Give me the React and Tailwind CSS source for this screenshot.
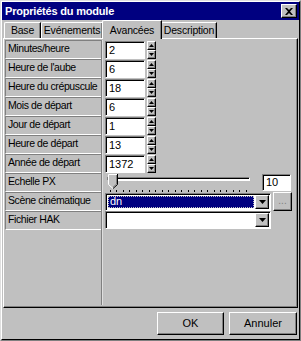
import React from 'react'

const raised = 'border border-t-white border-l-white border-r-black border-b-black shadow-[inset_-1px_-1px_0_#808080]'
const sunken = 'border border-t-[#808080] border-l-[#808080] border-r-white border-b-white shadow-[inset_1px_1px_0_#000]'
const tab = 'border-t border-l border-t-white border-l-white border-r border-r-black shadow-[inset_-1px_0_0_#808080] rounded-tl-[2px] whitespace-nowrap'

const rows = [
  { label: 'Minutes/heure', type: 'spin', value: '2' },
  { label: "Heure de l'aube", type: 'spin', value: '6' },
  { label: 'Heure du crépuscule', type: 'spin', value: '18' },
  { label: 'Mois de départ', type: 'spin', value: '6' },
  { label: 'Jour de départ', type: 'spin', value: '1' },
  { label: 'Heure de départ', type: 'spin', value: '13' },
  { label: 'Année de départ', type: 'spin', value: '1372' },
  { label: 'Echelle PX', type: 'slider', value: '10' },
  { label: 'Scène cinématique', type: 'combo', value: 'dn', selected: true },
  { label: 'Fichier HAK', type: 'combo', value: '' },
]

function Arrow({ down }) {
  return (
    <svg width="5" height="3" viewBox="0 0 5 3">
      <path d={down ? 'M0 0h5L2.5 3z' : 'M0 3h5L2.5 0z'} fill="#000" />
    </svg>
  )
}

function Spin({ value }) {
  return (
    <div className="flex items-start gap-[2px] pt-[1px]">
      <div className={`w-[40px] h-[18px] bg-white ${sunken} pl-[3px] flex items-center text-[11px]`}>{value}</div>
      <div className="flex flex-col w-[9px]">
        <div className={`h-[9px] bg-[#c0c0c0] ${raised} flex items-center justify-center`}><Arrow /></div>
        <div className={`h-[9px] bg-[#c0c0c0] ${raised} flex items-center justify-center`}><Arrow down /></div>
      </div>
    </div>
  )
}

function Slider({ value }) {
  const ticks = Array.from({ length: 22 })
  return (
    <div className="flex items-start pt-[1px]">
      <div className="relative w-[150px] h-[18px] pl-[2px] pr-[5px]">
        <div className={`mt-[3px] h-[4px] ${sunken} bg-white`} />
        <div className="flex justify-between px-[3px] mt-[9px]">
          {ticks.map((_, i) => (
            <div key={i} className="w-[1px] h-[2px] bg-black" />
          ))}
        </div>
        <svg className="absolute left-[3px] top-0" width="10" height="15" viewBox="0 0 10 15">
          <path d="M0.5 0.5h9v10l-4.5 4l-4.5-4z" fill="#c0c0c0" />
          <path d="M0.5 10.5v-10h8.5" stroke="#fff" fill="none" />
          <path d="M9.5 0v10.5l-4.5 4" stroke="#000" fill="none" />
          <path d="M8.5 1v9l-3.5 3.2" stroke="#808080" fill="none" />
          <path d="M0.5 10.5l4.5 4" stroke="#fff" fill="none" />
        </svg>
      </div>
      <div className={`ml-[7px] w-[29px] h-[17px] bg-white ${sunken} pl-[3px] flex items-center text-[11px]`}>{value}</div>
    </div>
  )
}

function Combo({ value, selected }) {
  return (
    <div className="flex items-center gap-[2px]">
      <div className={`w-[166px] h-[18px] bg-white ${sunken} flex items-stretch p-[1px]`}>
        <div className="flex-1 p-[1px]">
          {selected && (
            <div className="h-full bg-[#000080] text-white text-[11px] pl-[2px] flex items-center outline-1 outline-dotted outline-[#c0c0c0] -outline-offset-1">{value}</div>
          )}
        </div>
        <div className={`w-[14px] bg-[#c0c0c0] ${raised} flex items-center justify-center`}>
          <svg width="7" height="4" viewBox="0 0 7 4"><path d="M0 0h7L3.5 4z" fill="#000" /></svg>
        </div>
      </div>
      {selected && (
        <div className={`w-[19px] h-[19px] bg-[#c0c0c0] ${raised} flex items-center justify-center text-[10px] text-[#808080] leading-none pb-[2px]`}>...</div>
      )}
    </div>
  )
}

export default function App() {
  return (
    <div className="w-[301px] h-[341px] bg-[#c0c0c0] font-['Liberation_Sans',Arial,sans-serif] text-black">
      <div className="h-full border border-t-[#dfdfdf] border-l-[#dfdfdf] border-r-[#808080] border-b-[#808080]">
        <div className="h-full border border-t-white border-l-white border-r-black border-b-black flex flex-col">
          {/* Title bar */}
          <div className="h-[18px] bg-[#000080] flex items-center justify-between pl-[3px] pr-[2px]">
            <span className="text-white font-bold text-[11px] tracking-[-0.2px]">Propriétés du module</span>
            <div className={`w-[16px] h-[14px] bg-[#c0c0c0] ${raised} flex items-center justify-center`}>
              <svg width="8" height="7" viewBox="0 0 8 7">
                <path d="M0 0h2l2 2l2-2h2l-3 3.5l3 3.5h-2l-2-2l-2 2h-2l3-3.5z" fill="#000" />
              </svg>
            </div>
          </div>

          {/* Tabs */}
          <div className="flex items-end h-[18px] pl-[2px] pt-[1px] text-[10.5px] tracking-[-0.2px]">
            <div className={`w-[37px] h-[16px] ${tab} flex items-center justify-center`}>Base</div>
            <div className={`w-[62px] h-[16px] ${tab} flex items-center justify-center`}>Evénements</div>
            <div className={`w-[60px] h-[19px] -mb-[1px] -ml-[1px] relative z-10 bg-[#c0c0c0] ${tab} flex items-start pt-[2px] justify-center`}>Avancées</div>
            <div className={`w-[56px] h-[16px] -ml-[1px] ${tab} flex items-center justify-center`}>Description</div>
          </div>

          {/* Panel */}
          <div className="mx-[1px] h-[270px] border border-t-white border-l-white border-r-black border-b-black shadow-[inset_-1px_-1px_0_#808080] flex pt-[1px] pl-[1px] pb-[2px]">
            <div className="w-[97px] border-r border-r-[#808080] shadow-[1px_0_0_#dfdfdf] flex flex-col">
              {rows.map((r) => (
                <div key={r.label} className="h-[19px] border-t border-l border-b border-t-[#808080] border-l-[#808080] border-b-white pl-[2px] text-[10.5px] leading-[13px] tracking-[-0.4px] pt-[1px] whitespace-nowrap overflow-hidden">
                  {r.label}
                </div>
              ))}
            </div>
            <div className="flex flex-col pl-[3px]">
              {rows.map((r) => (
                <div key={r.label} className="h-[19px]">
                  {r.type === 'spin' && <Spin value={r.value} />}
                  {r.type === 'slider' && <Slider value={r.value} />}
                  {r.type === 'combo' && <Combo value={r.value} selected={r.selected} />}
                </div>
              ))}
            </div>
          </div>

          {/* Buttons */}
          <div className="flex justify-end gap-[5px] pr-[2px] pt-[4px] text-[11px]">
            <div className={`w-[67px] h-[23px] bg-[#c0c0c0] ${raised} flex items-center justify-center`}>OK</div>
            <div className={`w-[68px] h-[23px] bg-[#c0c0c0] ${raised} flex items-center justify-center`}>Annuler</div>
          </div>
        </div>
      </div>
    </div>
  )
}
